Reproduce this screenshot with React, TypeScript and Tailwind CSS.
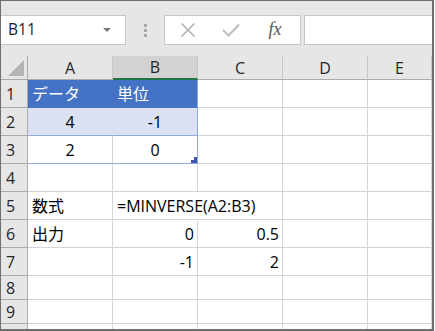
import React from 'react';

type Cell = {
  text?: string;
  align?: 'left' | 'center' | 'right';
  cls?: string;
  overflow?: boolean;
};

type Row = { n: number; h: string; cells: Cell[] };

const cols = ['A', 'B', 'C', 'D', 'E'];
const colW = ['w-[85px]', 'w-[85px]', 'w-[85px]', 'w-[85px]', 'w-[64px]'];

const grid = 'border-r border-b border-[#d4d4d4]';

const rows: Row[] = [
  {
    n: 1,
    h: 'h-[28px]',
    cells: [
      { text: 'データ', align: 'left', cls: 'bg-[#4472c4] text-white border-r border-b border-[#4472c4]' },
      { text: '単位', align: 'left', cls: 'bg-[#4472c4] text-white border-r border-b border-r-[#8eaadb] border-b-[#4472c4]' },
      {}, {}, {},
    ],
  },
  {
    n: 2,
    h: 'h-[28px]',
    cells: [
      { text: '4', align: 'center', cls: 'bg-[#d9e1f2] border-r border-b border-r-[#d9e1f2] border-b-[#8eaadb]' },
      { text: '-1', align: 'center', cls: 'bg-[#d9e1f2] border-r border-b border-[#8eaadb]' },
      {}, {}, {},
    ],
  },
  {
    n: 3,
    h: 'h-[28px]',
    cells: [
      { text: '2', align: 'center', cls: 'border-r border-b border-r-[#d4d4d4] border-b-[#8eaadb]' },
      { text: '0', align: 'center', cls: 'border-r border-b border-[#8eaadb] relative' },
      {}, {}, {},
    ],
  },
  { n: 4, h: 'h-[28px]', cells: [{}, {}, {}, {}, {}] },
  {
    n: 5,
    h: 'h-[28px]',
    cells: [
      { text: '数式', align: 'left' },
      { text: '=MINVERSE(A2:B3)', align: 'left', overflow: true, cls: 'border-r border-b border-r-white border-b-[#d4d4d4]' },
      {}, {}, {},
    ],
  },
  {
    n: 6,
    h: 'h-[28px]',
    cells: [{ text: '出力', align: 'left' }, { text: '0', align: 'right' }, { text: '0.5', align: 'right' }, {}, {}],
  },
  {
    n: 7,
    h: 'h-[28px]',
    cells: [{}, { text: '-1', align: 'right' }, { text: '2', align: 'right' }, {}, {}],
  },
  { n: 8, h: 'h-[24px]', cells: [{}, {}, {}, {}, {}] },
  { n: 9, h: 'h-[24px]', cells: [{}, {}, {}, {}, {}] },
  { n: 10, h: 'h-[24px]', cells: [{}, {}, {}, {}, {}] },
];

const alignCls = {
  left: 'justify-start pl-[4px]',
  center: 'justify-center',
  right: 'justify-end pr-[3px]',
};

export default function App() {
  return (
    <div className="w-[435px] h-[331px] bg-white">
      <div
        className="w-[434px] h-[331px] border-t border-l border-r-2 border-b-2 border-[#6e6e6e] overflow-hidden flex flex-col text-black"
        style={{ fontFamily: '"Open Sans", "Noto Sans CJK JP", sans-serif' }}
      >
        {/* Formula bar */}
        <div className="h-[55px] shrink-0 bg-[#e6e6e6] flex items-start pt-[14px]">
          <div className="w-[125px] h-[30px] bg-white border border-l-0 border-[#c6c6c6] flex items-center justify-between pl-[7px] pr-[14px]">
            <span className="text-[15.5px] text-[#222]">B11</span>
            <svg width="8" height="5" viewBox="0 0 8 5">
              <polygon points="0,0 8,0 4,4" fill="#7a7a7a" />
            </svg>
          </div>
          <div className="w-[38px] h-[30px] flex flex-col items-center justify-center gap-[2px]">
            <div className="w-[3px] h-[3px] bg-[#a8a8a8]" />
            <div className="w-[3px] h-[3px] bg-[#a8a8a8]" />
            <div className="w-[3px] h-[3px] bg-[#a8a8a8]" />
          </div>
          <div className="w-[137px] h-[30px] bg-white border border-[#c6c6c6] flex items-center">
            <div className="w-[44px] flex justify-center pl-[2px]">
              <svg width="16" height="16" viewBox="0 0 16 16">
                <path d="M1.5 1.5 L14.5 14.5 M14.5 1.5 L1.5 14.5" stroke="#b0b0b0" strokeWidth="1.6" fill="none" />
              </svg>
            </div>
            <div className="w-[44px] flex justify-center">
              <svg width="18" height="14" viewBox="0 0 18 14">
                <path d="M1 7 L6.5 12.5 L17 1.5" stroke="#bdbdbd" strokeWidth="2" fill="none" />
              </svg>
            </div>
            <div className="w-[44px] flex justify-center">
              <span
                className="italic text-[18px] text-[#555] leading-none pb-[2px]"
                style={{ fontFamily: '"Liberation Serif", serif' }}
              >
                fx
              </span>
            </div>
          </div>
          <div className="ml-[3px] flex-1 h-[30px] bg-white border border-r-0 border-[#c6c6c6]" />
        </div>

        {/* Column headers */}
        <div className="flex h-[24px] shrink-0 bg-[#e6e6e6]">
          <div className="w-[27px] shrink-0 border-r border-b border-[#ababab] flex items-end justify-end pr-[3px] pb-[3px]">
            <svg width="16" height="16" viewBox="0 0 16 16">
              <polygon points="0,16 16,16 16,0" fill="#b5b5b5" />
            </svg>
          </div>
          {cols.map((c, i) => (
            <div
              key={c}
              className={
                colW[i] +
                ' shrink-0 flex items-center justify-center text-[16px] text-[#262626] border-r border-[#c6c6c6] ' +
                (c === 'B'
                  ? 'bg-[#d2d2d2] border-b-2 border-b-[#217346]'
                  : 'border-b border-b-[#ababab]')
              }
            >
              {c}
            </div>
          ))}
        </div>

        {/* Rows */}
        {rows.map((r) => (
          <div key={r.n} className={'flex shrink-0 ' + r.h}>
            <div className="w-[27px] shrink-0 bg-[#e6e6e6] border-r border-b border-[#ababab] flex items-center pl-[5px] text-[16px] text-[#262626]">
              {/* row 10 is only a sliver at the bottom edge */}
              {r.n < 10 ? r.n : null}
            </div>
            {r.cells.map((cell, i) => (
              <div
                key={i}
                className={
                  colW[i] +
                  ' shrink-0 flex items-center text-[16px] whitespace-nowrap ' +
                  (cell.cls ?? grid) +
                  ' ' +
                  alignCls[cell.align ?? 'left'] +
                  (cell.overflow ? ' overflow-visible relative z-10' : ' overflow-hidden')
                }
              >
                {cell.text}
                {r.n === 3 && i === 1 && (
                  <svg className="absolute right-[0px] bottom-[0px]" width="6" height="6" viewBox="0 0 6 6">
                    <polygon points="0,6 0,3 3,3 3,0 6,0 6,6" fill="#3f51b5" />
                  </svg>
                )}
              </div>
            ))}
          </div>
        ))}
      </div>
    </div>
  );
}
